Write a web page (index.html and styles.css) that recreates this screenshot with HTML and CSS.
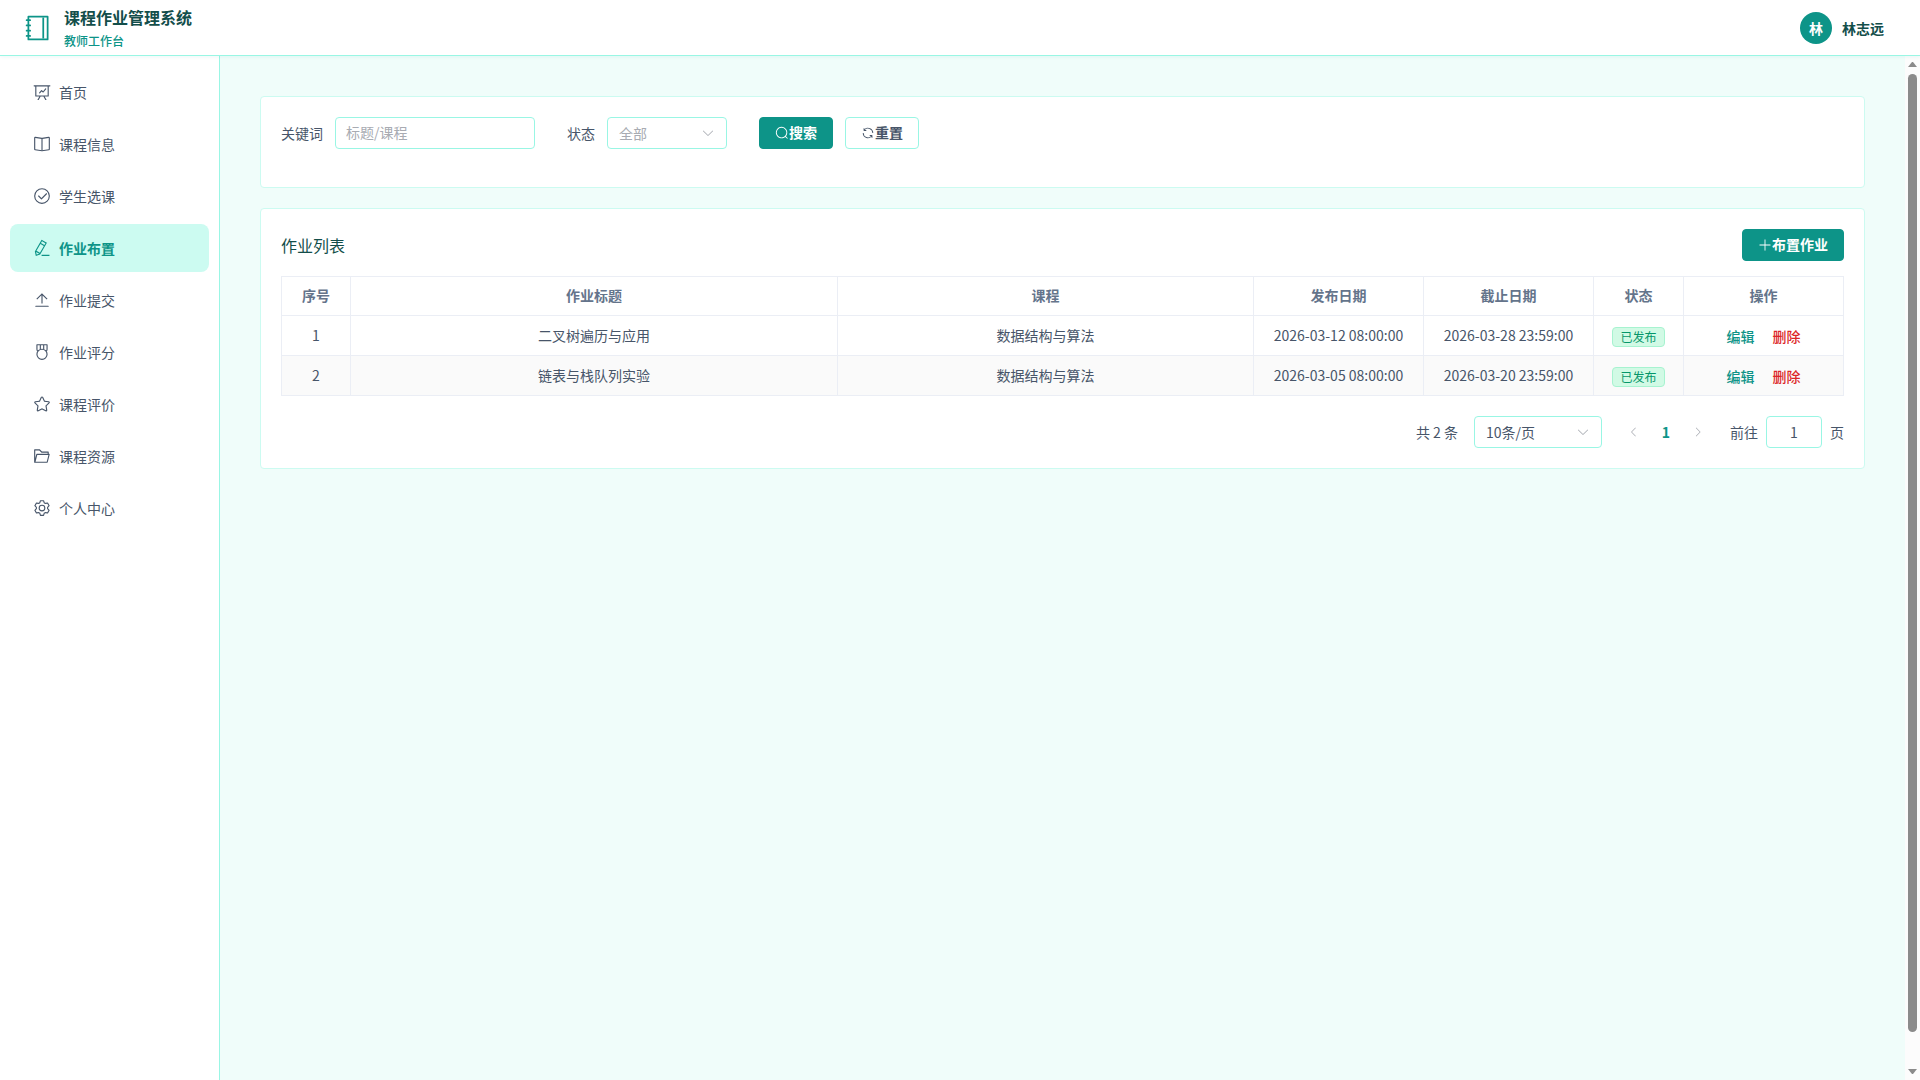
FILE: index.html
```html
<!DOCTYPE html>
<html lang="zh-CN">
<head>
<meta charset="utf-8">
<title>课程作业管理系统</title>
<meta name="viewport" content="width=device-width, initial-scale=1">
<link rel="stylesheet" href="styles.css">
</head>
<body>
<div class="app">
  <header class="header">
    <div class="brand">
      <svg class="brand-icon" viewBox="0 0 1024 1024" aria-hidden="true"><path d="M192 128v768h640V128H192zm-32-64h704a32 32 0 0 1 32 32v832a32 32 0 0 1-32 32H160a32 32 0 0 1-32-32V96a32 32 0 0 1 32-32z"/><path d="M672 128h64v768h-64zM96 192h128q32 0 32 32t-32 32H96q-32 0-32-32t32-32zm0 192h128q32 0 32 32t-32 32H96q-32 0-32-32t32-32zm0 192h128q32 0 32 32t-32 32H96q-32 0-32-32t32-32zm0 192h128q32 0 32 32t-32 32H96q-32 0-32-32t32-32z"/></svg>
      <div>
        <h1 class="brand-title">课程作业管理系统</h1>
        <p class="brand-role">教师工作台</p>
      </div>
    </div>
    <button class="user" type="button"><span class="avatar">林</span><span>林志远</span></button>
  </header>
  <div class="body">
    <nav class="sidebar">
      <a class="menu-item" href="#"><svg class="menu-icon" viewBox="0 0 1024 1024" aria-hidden="true"><path d="m665.216 768 110.848 192h-73.856L591.36 768H433.024L322.176 960H248.32l110.848-192H160a32 32 0 0 1-32-32V192H64a32 32 0 0 1 0-64h896a32 32 0 1 1 0 64h-64v544a32 32 0 0 1-32 32H665.216zM832 192H192v512h640V192zM352 544.896l111.68-132.096a32 32 0 0 1 45.248-3.648l66.88 55.232 122.56-145.024a32 32 0 1 1 48.896 41.28L603.52 530.176a32 32 0 0 1-44.8 4.032l-66.816-55.168-91.072 107.2A32 32 0 0 1 352 544.896z"/></svg>首页</a>
      <a class="menu-item" href="#"><svg class="menu-icon" viewBox="0 0 1024 1024" aria-hidden="true"><path d="m512 863.36 384-54.848v-638.72L525.568 222.72a96 96 0 0 1-27.136 0L128 169.792v638.72l384 54.848zM137.024 106.432l370.432 52.928a32 32 0 0 0 9.088 0l370.432-52.928A64 64 0 0 1 960 169.792v638.72a64 64 0 0 1-54.976 63.36l-388.48 55.488a32 32 0 0 1-9.088 0l-388.48-55.488A64 64 0 0 1 64 808.512v-638.72a64 64 0 0 1 73.024-63.36z"/><path d="M480 192h64v704h-64z"/></svg>课程信息</a>
      <a class="menu-item" href="#"><svg class="menu-icon" viewBox="0 0 1024 1024" aria-hidden="true"><path d="M512 896a384 384 0 1 0 0-768 384 384 0 0 0 0 768zm0 64a448 448 0 1 1 0-896 448 448 0 0 1 0 896z"/><path d="M745.344 361.344a32 32 0 0 1 45.312 45.312l-288 288a32 32 0 0 1-45.312 0l-160-160a32 32 0 1 1 45.312-45.312L480 626.752l265.344-265.408z"/></svg>学生选课</a>
      <a class="menu-item active" href="#" aria-current="page"><svg class="menu-icon" viewBox="0 0 1024 1024" aria-hidden="true"><path d="m199.04 672.64 193.984 112 224-387.968-193.92-112-224 388.032zm-23.872 60.16 32.896 148.288 144.896-45.696L175.168 732.8zM455.04 229.248l193.92 112 56.704-98.112-193.984-112-56.64 98.112zM104.32 708.8l384-665.024 304.768 175.936L409.152 884.8h.064l-248.448 78.336L104.32 708.8zm384 254.272v-64h448v64h-448z"/></svg>作业布置</a>
      <a class="menu-item" href="#"><svg class="menu-icon" viewBox="0 0 1024 1024" aria-hidden="true"><path d="M160 832h704a32 32 0 1 1 0 64H160a32 32 0 1 1 0-64zm384-578.304V704h-64V247.296L237.248 490.048 192 444.8 508.8 128l316.8 316.8-45.312 45.248L544 253.696z"/></svg>作业提交</a>
      <a class="menu-item" href="#"><svg class="menu-icon" viewBox="0 0 1024 1024" aria-hidden="true"><path d="M512 896a256 256 0 1 0 0-512 256 256 0 0 0 0 512zm0 64a320 320 0 1 1 0-640 320 320 0 0 1 0 640z"/><path d="M384 128H256v224c0 35 8 60 38 82l-46 46c-40-36-56-78-56-128V96a32 32 0 0 1 32-32h576a32 32 0 0 1 32 32v256c0 50-16 92-56 128l-46-46c30-22 38-47 38-82V128H640v224h-64V128H448v224h-64V128z"/></svg>作业评分</a>
      <a class="menu-item" href="#"><svg class="menu-icon" viewBox="0 0 1024 1024" aria-hidden="true"><path d="m512 747.84 228.16 119.936a6.4 6.4 0 0 0 9.28-6.72l-43.52-254.08 184.512-179.904a6.4 6.4 0 0 0-3.52-10.88l-255.104-37.12L517.76 147.904a6.4 6.4 0 0 0-11.52 0L392.192 379.072l-255.104 37.12a6.4 6.4 0 0 0-3.52 10.88L318.08 606.976l-43.584 254.08a6.4 6.4 0 0 0 9.28 6.72L512 747.84zM313.6 924.48a70.4 70.4 0 0 1-102.144-74.24l37.888-220.928L88.96 472.96A70.4 70.4 0 0 1 128 352.896l221.76-32.256 99.2-200.96a70.4 70.4 0 0 1 126.208 0l99.2 200.96 221.824 32.256a70.4 70.4 0 0 1 39.04 120.064L774.72 629.376l37.888 220.928a70.4 70.4 0 0 1-102.144 74.24L512 820.096l-198.4 104.32z"/></svg>课程评价</a>
      <a class="menu-item" href="#"><svg class="menu-icon" viewBox="0 0 1024 1024" aria-hidden="true"><path d="M878.08 448H241.92l-96 384h636.16l96-384zM832 384v-64H485.76L357.504 192H128v448l57.92-231.744A32 32 0 0 1 216.96 384H832zm-24.96 512H96a32 32 0 0 1-32-32V160a32 32 0 0 1 32-32h287.872l128.384 128H864a32 32 0 0 1 32 32v96h23.04a32 32 0 0 1 31.04 39.744l-112 448A32 32 0 0 1 807.04 896z"/></svg>课程资源</a>
      <a class="menu-item" href="#"><svg class="menu-icon" viewBox="0 0 1024 1024" aria-hidden="true"><path d="M600.704 64a32 32 0 0 1 30.464 22.208l35.2 109.376c14.784 7.232 28.928 15.36 42.432 24.512l112.384-24.192a32 32 0 0 1 34.432 15.36L944.32 364.8a32 32 0 0 1-4.032 37.504l-77.12 85.12a357.12 357.12 0 0 1 0 49.024l77.12 85.248a32 32 0 0 1 4.032 37.504l-88.704 153.6a32 32 0 0 1-34.432 15.296L708.8 803.904c-13.44 9.088-27.648 17.28-42.368 24.512l-35.264 109.376A32 32 0 0 1 600.704 960H423.296a32 32 0 0 1-30.464-22.208L357.696 828.48a351.616 351.616 0 0 1-42.56-24.64l-112.32 24.256a32 32 0 0 1-34.432-15.36L79.68 659.2a32 32 0 0 1 4.032-37.504l77.12-85.248a357.12 357.12 0 0 1 0-48.896l-77.12-85.248A32 32 0 0 1 79.68 364.8l88.704-153.6a32 32 0 0 1 34.432-15.296l112.32 24.256c13.568-9.152 27.776-17.408 42.56-24.64l35.2-109.312A32 32 0 0 1 423.232 64H600.64zm-23.424 64H446.72l-36.352 113.088-24.512 11.968a294.113 294.113 0 0 0-34.816 20.096l-22.656 15.36-116.224-25.088-65.28 113.152 79.68 88.192-1.92 27.136a293.12 293.12 0 0 0 0 40.192l1.92 27.136-79.808 88.192 65.344 113.152 116.224-25.024 22.656 15.296a294.113 294.113 0 0 0 34.816 20.096l24.512 11.968L446.72 896h130.688l36.48-113.152 24.448-11.904a288.282 288.282 0 0 0 34.752-20.096l22.592-15.296 116.288 25.024 65.28-113.152-79.744-88.192 1.92-27.136a293.12 293.12 0 0 0 0-40.256l-1.92-27.136 79.808-88.128-65.344-113.152-116.288 24.96-22.592-15.232a287.616 287.616 0 0 0-34.752-20.096l-24.448-11.904L577.344 128zM512 320a192 192 0 1 1 0 384 192 192 0 0 1 0-384zm0 64a128 128 0 1 0 0 256 128 128 0 0 0 0-256z"/></svg>个人中心</a>
    </nav>
    <main class="main">
      <section class="card">
        <form class="search-form">
          <div class="field">
            <label for="keyword">关键词</label>
            <input class="control keyword" id="keyword" type="text" placeholder="标题/课程">
          </div>
          <div class="field">
            <label for="status">状态</label>
            <span class="select-wrap status-select">
              <select class="control placeholder" id="status"><option>全部</option></select>
              <svg class="select-arrow" viewBox="0 0 1024 1024" aria-hidden="true"><path d="M831.872 340.864 512 652.672 192.128 340.864a30.592 30.592 0 0 0-42.752 0 29.12 29.12 0 0 0 0 41.6L489.664 714.24a32 32 0 0 0 44.672 0l340.288-331.712a29.12 29.12 0 0 0 0-41.728 30.592 30.592 0 0 0-42.752 0z"/></svg>
            </span>
          </div>
          <div class="form-buttons">
            <button class="btn btn-primary" type="button"><svg class="icon" viewBox="0 0 1024 1024" aria-hidden="true"><path d="m795.904 750.72 124.992 124.928a32 32 0 0 1-45.248 45.248L750.656 795.904a416 416 0 1 1 45.248-45.248zM480 832a352 352 0 1 0 0-704 352 352 0 0 0 0 704z"/></svg><span class="btn-label">搜索</span></button>
            <button class="btn" type="button"><svg class="icon" viewBox="0 0 1024 1024" aria-hidden="true"><path d="M771.776 794.88A384 384 0 0 1 128 512h64a320 320 0 0 0 555.712 216.448H654.72a32 32 0 1 1 0-64h149.056a32 32 0 0 1 32 32v148.928a32 32 0 1 1-64 0v-50.56zM276.288 295.616h92.992a32 32 0 0 1 0 64H220.16a32 32 0 0 1-32-32V178.56a32 32 0 0 1 64 0v50.56A384 384 0 0 1 896.128 512h-64a320 320 0 0 0-555.776-216.384z"/></svg><span class="btn-label">重置</span></button>
          </div>
        </form>
      </section>

      <section class="card">
        <div class="card-head">
          <h2 class="card-title">作业列表</h2>
          <button class="btn btn-primary" type="button"><svg class="icon" viewBox="0 0 1024 1024" aria-hidden="true"><path d="M480 480V128a32 32 0 0 1 64 0v352h352a32 32 0 1 1 0 64H544v352a32 32 0 1 1-64 0V544H128a32 32 0 0 1 0-64h352z"/></svg><span class="btn-label">布置作业</span></button>
        </div>
        <table class="table">
          <colgroup><col class="col-index"><col class="col-title"><col><col class="col-date"><col class="col-date"><col class="col-status"><col class="col-actions"></colgroup>
          <thead>
            <tr><th>序号</th><th>作业标题</th><th>课程</th><th>发布日期</th><th>截止日期</th><th>状态</th><th>操作</th></tr>
          </thead>
          <tbody>
            <tr><td>1</td><td>二叉树遍历与应用</td><td>数据结构与算法</td><td>2026-03-12 08:00:00</td><td>2026-03-28 23:59:00</td><td><span class="tag">已发布</span></td><td><div class="actions"><button class="link" type="button">编辑</button><button class="link link-danger" type="button">删除</button></div></td></tr>
            <tr><td>2</td><td>链表与栈队列实验</td><td>数据结构与算法</td><td>2026-03-05 08:00:00</td><td>2026-03-20 23:59:00</td><td><span class="tag">已发布</span></td><td><div class="actions"><button class="link" type="button">编辑</button><button class="link link-danger" type="button">删除</button></div></td></tr>
          </tbody>
        </table>
        <div class="pagination">
          <span>共 2 条</span>
          <span class="select-wrap size-select">
            <select class="control" aria-label="每页条数"><option>10条/页</option></select>
            <svg class="select-arrow" viewBox="0 0 1024 1024" aria-hidden="true"><path d="M831.872 340.864 512 652.672 192.128 340.864a30.592 30.592 0 0 0-42.752 0 29.12 29.12 0 0 0 0 41.6L489.664 714.24a32 32 0 0 0 44.672 0l340.288-331.712a29.12 29.12 0 0 0 0-41.728 30.592 30.592 0 0 0-42.752 0z"/></svg>
          </span>
          <div class="pager">
            <button class="page-btn" type="button" disabled aria-label="上一页"><svg class="page-icon" viewBox="0 0 1024 1024" aria-hidden="true"><path d="M609.408 149.376 277.76 489.6a32 32 0 0 0 0 44.672l331.648 340.352a29.12 29.12 0 0 0 41.728 0 30.592 30.592 0 0 0 0-42.752L339.264 511.936l311.872-319.872a30.592 30.592 0 0 0 0-42.688 29.12 29.12 0 0 0-41.728 0z"/></svg></button>
            <button class="page-btn current" type="button">1</button>
            <button class="page-btn" type="button" disabled aria-label="下一页"><svg class="page-icon" viewBox="0 0 1024 1024" aria-hidden="true"><path d="M340.864 149.312a30.592 30.592 0 0 0 0 42.752L652.736 512 340.864 831.872a30.592 30.592 0 0 0 0 42.752 29.12 29.12 0 0 0 41.728 0L714.24 534.336a32 32 0 0 0 0-44.672L382.592 149.376a29.12 29.12 0 0 0-41.728 0z"/></svg></button>
          </div>
          <div class="jump">
            <label for="jump">前往</label>
            <input class="control jump-input" id="jump" type="text" value="1">
            <span>页</span>
          </div>
        </div>
      </section>
    </main>
    <div class="scrollbar" aria-hidden="true">
      <svg class="scroll-arrow" viewBox="0 0 9 5"><path d="M0 5h9L5 0H4z"/></svg>
      <div class="scroll-track"><div class="scroll-thumb"></div></div>
      <svg class="scroll-arrow" viewBox="0 0 9 5"><path d="M0 0h9L5 5H4z"/></svg>
    </div>
  </div>
</div>
</body>
</html>
```
FILE: styles.css
```css
:root {
  --primary: #0d9488;
  --primary-dark: #134e4a;
  --border: #99f6e4;
  --border-light: #ccfbf1;
  --page: #f0fdfa;
  --text: #475569;
  --text-muted: #64748b;
  --placeholder: #a8abb2;
  --line: #ebeef5;
}

* {
  box-sizing: border-box;
}

body {
  margin: 0;
  color: var(--text);
  font: 14px/20px "Noto Sans CJK SC", sans-serif;
}

button,
input,
select {
  font: inherit;
  color: inherit;
}

button {
  cursor: pointer;
}

svg {
  display: block;
  flex: none;
  fill: currentColor;
}

.app {
  display: flex;
  flex-direction: column;
  height: 100vh;
}

.header {
  position: relative;
  z-index: 1;
  display: flex;
  flex: none;
  align-items: center;
  justify-content: space-between;
  height: 56px;
  padding: 0 24px;
  background: #fff;
  border-bottom: 1px solid var(--border);
  box-shadow: 0 1px 4px rgba(13, 148, 136, 0.08);
}

.brand {
  display: flex;
  align-items: center;
  gap: 12px;
}

.brand-icon {
  width: 28px;
  height: 28px;
  color: var(--primary);
}

.brand-title {
  margin: 0;
  color: var(--primary-dark);
  font-size: 16px;
  line-height: 24px;
  font-weight: 700;
}

.brand-role {
  margin: 2px 0 0;
  color: var(--primary);
  font-size: 12px;
  line-height: 19px;
  font-weight: 500;
}

.user {
  display: flex;
  align-items: center;
  gap: 10px;
  padding: 0 12px;
  color: var(--primary-dark);
  font-weight: 600;
  background: none;
  border: 0;
}

.avatar {
  display: flex;
  align-items: center;
  justify-content: center;
  width: 32px;
  height: 32px;
  color: #fff;
  background: var(--primary);
  border-radius: 50%;
}

.body {
  display: flex;
  flex: 1;
  min-height: 0;
}

.sidebar {
  display: flex;
  flex: none;
  flex-direction: column;
  gap: 4px;
  width: 220px;
  padding: 12px 10px;
  background: #fff;
  border-right: 1px solid var(--border);
}

.menu-item {
  display: flex;
  align-items: center;
  gap: 8px;
  height: 48px;
  padding: 0 23px;
  color: var(--text);
  text-decoration: none;
  border-radius: 8px;
}

.menu-item.active {
  color: var(--primary);
  font-weight: 600;
  background: var(--border-light);
}

.menu-icon {
  width: 18px;
  height: 18px;
}

.main {
  display: flex;
  flex: 1;
  flex-direction: column;
  gap: 20px;
  min-width: 0;
  padding: 40px;
  overflow-y: auto;
  scrollbar-width: none;
  background: var(--page);
}

.scrollbar {
  display: flex;
  flex: none;
  flex-direction: column;
  align-items: center;
  gap: 7px;
  width: 15px;
  padding: 6px 0;
  color: #8b8b8b;
  background: #fcfcfc;
}

.scroll-arrow {
  width: 9px;
  height: 5px;
}

.scroll-track {
  flex: 1;
  width: 9px;
}

.scroll-thumb {
  height: 97%;
  background: #8b8b8b;
  border-radius: 5px;
}

.card {
  flex: none;
  padding: 20px;
  background: #fff;
  border: 1px solid var(--border-light);
  border-radius: 4px;
}

.search-form {
  display: flex;
  flex-wrap: wrap;
  gap: 18px 32px;
  padding-bottom: 18px;
}

.field {
  display: flex;
  align-items: center;
  gap: 12px;
}

.control {
  height: 32px;
  padding: 0 11px;
  background: #fff;
  border: 1px solid var(--border);
  border-radius: 4px;
  outline: none;
}

.control::placeholder {
  color: var(--placeholder);
}

.control.placeholder {
  color: var(--placeholder);
}

.keyword {
  width: 200px;
  padding: 0 10px 2px;
}

.select-wrap {
  display: inline-grid;
  align-items: center;
}

.select-wrap > * {
  grid-area: 1 / 1;
}

.select-wrap select {
  width: 100%;
  appearance: none;
}

.status-select {
  width: 120px;
}

.size-select {
  width: 128px;
}

.select-arrow {
  justify-self: end;
  width: 14px;
  height: 14px;
  margin-right: 12px;
  color: var(--placeholder);
  pointer-events: none;
}

.form-buttons {
  display: flex;
  gap: 12px;
}

.btn {
  display: inline-flex;
  align-items: center;
  height: 32px;
  padding: 0 15px;
  font-weight: 600;
  background: #fff;
  border: 1px solid var(--border);
  border-radius: 4px;
}

.btn-label {
  padding-bottom: 2px;
}

.btn-primary {
  color: #fff;
  background: var(--primary);
  border-color: var(--primary);
}

.icon {
  width: 14px;
  height: 14px;
}

.card-head {
  display: flex;
  align-items: center;
  justify-content: space-between;
  margin-bottom: 15px;
}

.card-title {
  margin: 0;
  color: var(--primary-dark);
  font-size: 16px;
  line-height: 24px;
  font-weight: 400;
}

.table {
  width: 100%;
  table-layout: fixed;
  border-collapse: separate;
  border-spacing: 0;
  border: solid var(--line);
  border-width: 1px 0 0 1px;
}

.col-index {
  width: 69px;
}

.col-title {
  width: 487px;
}

.col-date {
  width: 170px;
}

.col-status {
  width: 90px;
}

.col-actions {
  width: 160px;
}

.table th,
.table td {
  height: 40px;
  padding: 8px 0;
  line-height: 23px;
  text-align: center;
  border: solid var(--line);
  border-width: 0 1px 1px 0;
}

.table th {
  height: 39px;
  padding: 7px 0 8px;
  color: var(--text-muted);
  font-weight: 600;
}

.table tbody tr:nth-child(even) {
  background: #fafafa;
}

.tag {
  display: inline-flex;
  align-items: center;
  height: 20px;
  padding: 0 7px;
  color: #059669;
  font-size: 12px;
  line-height: 18px;
  vertical-align: middle;
  background: #d1fae5;
  border: 1px solid #a7f3d0;
  border-radius: 4px;
}

.actions {
  display: flex;
  justify-content: center;
  gap: 18px;
}

.link {
  padding: 1px 0 0;
  color: var(--primary);
  font-weight: 500;
  line-height: 22px;
  background: none;
  border: 0;
}

.link-danger {
  color: #dc2626;
}

.pagination {
  display: flex;
  align-items: center;
  justify-content: flex-end;
  gap: 16px;
  margin-top: 20px;
}

.pager {
  display: flex;
}

.page-btn {
  display: flex;
  align-items: center;
  justify-content: center;
  width: 32px;
  height: 32px;
  padding: 0;
  background: none;
  border: 0;
}

.page-btn:disabled {
  color: var(--placeholder);
}

.page-btn.current {
  color: var(--primary);
  font-weight: 700;
}

.page-icon {
  width: 12px;
  height: 12px;
}

.jump {
  display: flex;
  align-items: center;
  gap: 8px;
}

.jump-input {
  width: 56px;
  text-align: center;
}
```
